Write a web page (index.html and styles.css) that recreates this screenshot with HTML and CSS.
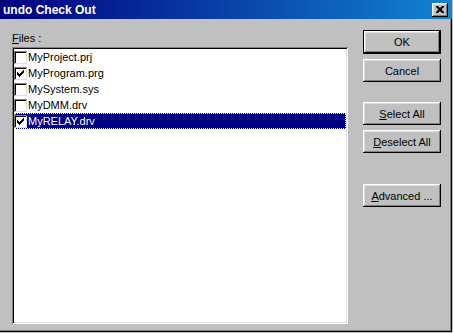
FILE: index.html
```html
<!DOCTYPE html>
<html>
<head>
    <link rel="stylesheet" href="styles.css">
</head>
<body>
    <div class="window">
        <div class="titlebar">
            <span class="title">undo Check Out</span>
            <span class="close">
                <svg width="8" height="7" viewBox="0 0 8 7"><path d="M0 0h2l2 2 2-2h2v1l-2.5 2.5L8 6v1H6L4 5 2 7H0V6l2.5-2.5L0 1z" fill="#000"/></svg>
            </span>
        </div>
        <div class="content">
            <div class="left">
                <div class="lbl"><u>F</u>iles :</div>
                <div class="listbox">
                    <div class="item"><span class="chk"></span>MyProject.prj</div>
                    <div class="item"><span class="chk on"></span>MyProgram.prg</div>
                    <div class="item"><span class="chk"></span>MySystem.sys</div>
                    <div class="item"><span class="chk"></span>MyDMM.drv</div>
                    <div class="item sel"><span class="chk on"></span>MyRELAY.drv</div>
                </div>
            </div>
            <div class="right">
                <button class="btn default">OK</button>
                <button class="btn">Cancel</button>
                <button class="btn gap1"><u>S</u>elect All</button>
                <button class="btn"><u>D</u>eselect All</button>
                <button class="btn gap2"><u>A</u>dvanced ...</button>
            </div>
        </div>
    </div>
</body>
</html>
```

FILE: styles.css
```css
body
{
    margin: 0;
    background-color: #c0c0c0;
    font-family: "Liberation Sans", Arial, sans-serif;
    font-size: 11px;
}
.window
{
    width: 452px;
    height: 332px;
    background-color: #c0c0c0;
    box-shadow: inset -1px -1px #000, inset -2px -2px #808080;
    overflow: hidden;
}
.titlebar
{
    height: 19px;
    display: flex;
    align-items: center;
    justify-content: space-between;
    padding: 0 4px 0 3px;
    background: linear-gradient(to right, #000080, #1084d0);
}
.title
{
    color: white;
    font-weight: bold;
    font-size: 12px;
}
.close
{
    width: 16px;
    height: 14px;
    box-sizing: border-box;
    display: flex;
    align-items: center;
    justify-content: center;
    background-color: #c0c0c0;
    box-shadow: inset -1px -1px #000, inset 1px 1px #fff, inset -2px -2px #808080, inset 2px 2px #dfdfdf;
}
.content
{
    display: flex;
    padding-left: 12px;
}
.left
{
    width: 336px;
}
.lbl
{
    margin-top: 13px;
    height: 15px;
    line-height: 13px;
}
.listbox
{
    height: 277px;
    background-color: white;
    box-sizing: border-box;
    padding: 2px 2px;
    box-shadow: inset 1px 1px #808080, inset -1px -1px #fff, inset 2px 2px #000, inset -2px -2px #dfdfdf;
}
.item
{
    height: 16px;
    display: flex;
    align-items: center;
    line-height: 16px;
    color: black;
}
.item.sel
{
    background-color: #000080;
    color: white;
    outline: 1px dotted #ffff90;
    outline-offset: -1px;
}
.chk
{
    width: 13px;
    height: 13px;
    box-sizing: border-box;
    margin: 0 1px 0 0;
    background-color: white;
    box-shadow: inset 1px 1px #808080, inset -1px -1px #dfdfdf, inset 2px 2px #000;
    flex-shrink: 0;
    position: relative;
}
.chk.on::after
{
    content: "";
    position: absolute;
    left: 3px;
    top: 3px;
    width: 7px;
    height: 7px;
    background: url("data:image/svg+xml;utf8,<svg xmlns='http://www.w3.org/2000/svg' width='7' height='7'><path d='M0 2h1v1h1v1h1V3h1V2h1V1h1V0h1v3H6v1H5v1H4v1H3v1H2V6H1V5H0z' fill='black'/></svg>");
}
.right
{
    display: flex;
    flex-direction: column;
    margin-left: 15px;
    padding-top: 11px;
}
.btn
{
    width: 78px;
    height: 23px;
    margin-top: 5px;
    padding: 0;
    border: none;
    background-color: #c0c0c0;
    font-family: "Liberation Sans", Arial, sans-serif;
    font-size: 11px;
    color: black;
    box-shadow: inset -1px -1px #000, inset 1px 1px #fff, inset -2px -2px #808080, inset 2px 2px #dfdfdf;
}
.btn.default
{
    margin-top: 0;
    height: 24px;
    box-shadow: inset 0 0 0 1px #000, inset -2px -2px #000, inset 2px 2px #fff, inset -3px -3px #808080, inset 3px 3px #dfdfdf;
}
.btn.gap1
{
    margin-top: 20px;
}
.btn.gap2
{
    margin-top: 31px;
}
```
